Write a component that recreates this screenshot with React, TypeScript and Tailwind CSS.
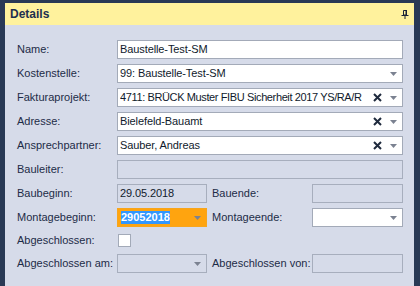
import type { ReactNode } from 'react';

const font = { fontFamily: '"Liberation Sans", Arial, sans-serif' };

function Arrow() {
  return (
    <svg width="7" height="4" viewBox="0 0 7 4" className="shrink-0">
      <path d="M0 0h7L3.5 4z" fill="#7b8291" />
    </svg>
  );
}

function Cross() {
  return (
    <svg width="9" height="9" viewBox="0 0 9 9" className="shrink-0">
      <path d="M1 1l7 7M8 1L1 8" stroke="#1f2a3d" strokeWidth="2" />
    </svg>
  );
}

function Pin() {
  return (
    <svg width="8" height="9" viewBox="0 0 8 9">
      <path d="M2.5 0.5h3v4.5h-3z" fill="none" stroke="#1b2436" />
      <rect x="4.5" y="0" width="1.5" height="5" fill="#1b2436" />
      <rect x="0.5" y="5" width="7" height="1" fill="#1b2436" />
      <rect x="3.5" y="6" width="1" height="3" fill="#1b2436" />
    </svg>
  );
}

function Label({ children, indent }: { children: ReactNode; indent?: boolean }) {
  return (
    <div className={`flex h-[19px] items-center text-[11px] text-[#1d2b47] ${indent ? 'pl-[5px]' : ''}`}>
      {children}
    </div>
  );
}

interface FieldProps {
  value?: string;
  combo?: boolean;
  clear?: boolean;
  disabled?: boolean;
  span?: boolean;
  tight?: boolean;
}

function Field({ value, combo, clear, disabled, span, tight }: FieldProps) {
  return (
    <div
      className={`flex h-[19px] items-center gap-[8px] border pl-[2px] pr-[5px] text-[11px] text-[#101a2c] ${
        tight ? 'tracking-[-0.38px]' : 'tracking-[-0.1px]'
      } ${disabled ? 'border-[#a7aebd] bg-[#d6dbe9]' : 'border-[#a3aab8] bg-white'} ${span ? 'col-span-3' : ''}`}
    >
      <span className="min-w-0 flex-1 overflow-hidden whitespace-nowrap">{value}</span>
      {clear && <Cross />}
      {combo && <Arrow />}
    </div>
  );
}

export default function App() {
  return (
    <div className="h-[286px] w-[420px] overflow-hidden bg-[#293955] pl-[5px] pr-[6px] pt-[3px]" style={font}>
      {/* Header */}
      <div className="flex h-[22px] items-center justify-between bg-[#fff29d] pl-[5px] pr-[5px]">
        <span className="text-[12px] font-bold text-[#1e2f4f]">Details</span>
        <Pin />
      </div>

      {/* Form */}
      <div className="h-full bg-[#d6dbe9] pl-[12px] pr-[11px] pt-[15px]">
        <div className="grid grid-cols-[100px_90px_105px_1fr] gap-y-[5px]">
          <Label>Name:</Label>
          <Field value="Baustelle-Test-SM" span />

          <Label>Kostenstelle:</Label>
          <Field value="99: Baustelle-Test-SM" combo span />

          <Label>Fakturaprojekt:</Label>
          <Field value="4711: BRÜCK Muster FIBU Sicherheit 2017 YS/RA/R" combo clear span tight />

          <Label>Adresse:</Label>
          <Field value="Bielefeld-Bauamt" combo clear span />

          <Label>Ansprechpartner:</Label>
          <Field value="Sauber, Andreas" combo clear span />

          <Label>Bauleiter:</Label>
          <Field disabled span />

          <Label>Baubeginn:</Label>
          <Field value="29.05.2018" disabled />
          <Label indent>Bauende:</Label>
          <Field disabled />

          <Label>Montagebeginn:</Label>
          <div className="flex h-[19px] items-center border border-[#f7a51c] bg-[#ffa40f] pl-[3px] pr-[5px] text-[11px]">
            <span className="flex-1">
              <span className="inline-block bg-[#3297fd] leading-[13px] font-bold text-white">29052018</span>
            </span>
            <Arrow />
          </div>
          <Label indent>Montageende:</Label>
          <Field combo />

          <div className="flex h-[17px] items-center text-[11px] text-[#1d2b47]">Abgeschlossen:</div>
          <div className="col-span-3 flex h-[17px] items-center pl-[1px]">
            <div className="h-[13px] w-[13px] border border-[#a3aab8] bg-white" />
          </div>

          <Label>Abgeschlossen am:</Label>
          <Field combo disabled />
          <Label indent>Abgeschlossen von:</Label>
          <Field disabled />
        </div>
      </div>
    </div>
  );
}
